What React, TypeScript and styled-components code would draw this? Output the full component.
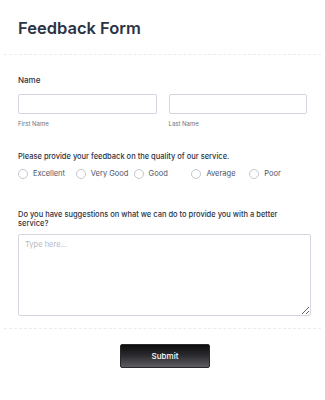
import React from "react";
import styled, { createGlobalStyle } from "styled-components";

const GlobalStyle = createGlobalStyle`
  body {
    margin: 0;
    background: #fff;
    font-family: Inter, "Noto Sans", "Liberation Sans", sans-serif;
    color: #2c3345;
  }
`;

const Page = styled.div`
  width: 325px;
`;

const Header = styled.div`
  padding: 18px 18px 16px;
`;

const Title = styled.h1`
  margin: 0;
  font-size: 16.5px;
  line-height: 20px;
  font-weight: 600;
  color: #2c3345;
`;

const Divider = styled.hr<{ $top?: number }>`
  margin: ${(p) => p.$top ?? 0}px 4px 0;
  border: 0;
  border-top: 1px dashed #eaecef;
`;

const Field = styled.div<{ $top: number }>`
  padding: ${(p) => p.$top}px 18px 0;
`;

const Label = styled.div`
  font-size: 7.5px;
  line-height: 8.6px;
  font-weight: 500;
  color: #2c3345;
`;

const NameLabel = styled(Label)`
  font-size: 8px;
  line-height: 10px;
`;

const Row = styled.div`
  display: grid;
  grid-template-columns: 1fr 1fr;
  column-gap: 12px;
  margin-top: 7px;
`;

const TextInput = styled.input`
  box-sizing: border-box;
  width: 100%;
  height: 20px;
  margin: 0;
  border: 1px solid #d3d6de;
  border-radius: 2px;
  background: #fff;
  outline: none;
`;

const SubLabel = styled.div`
  margin-top: 6px;
  font-size: 6px;
  line-height: 8px;
  color: #6b7285;
`;

const Radios = styled.div`
  display: grid;
  grid-template-columns: repeat(5, 1fr);
  margin-top: 8px;
`;

const RadioItem = styled.label`
  display: flex;
  align-items: center;
  gap: 5px;
  font-size: 7.5px;
  line-height: 10px;
  color: #4c5366;
  white-space: nowrap;
`;

const Circle = styled.span`
  box-sizing: border-box;
  width: 10px;
  height: 10px;
  border-radius: 50%;
  border: 1px solid #c2c7d1;
  background: #fff;
  flex: none;
`;

const TextArea = styled.textarea`
  display: block;
  box-sizing: border-box;
  width: calc(100% + 4px);
  height: 82px;
  margin-top: 6px;
  padding: 5px 6px;
  border: 1px solid #d3d6de;
  border-radius: 2px;
  font-family: inherit;
  font-size: 7.5px;
  color: #2c3345;
  outline: none;
  &::placeholder {
    color: #b4b8c2;
  }
`;

const Footer = styled.div`
  display: flex;
  justify-content: center;
  padding: 15px 0 0 5px;
`;

const SubmitButton = styled.button`
  width: 90px;
  height: 24px;
  border: 1px solid #2a2a2d;
  border-radius: 2px;
  background: linear-gradient(180deg, #0c0c0e 0%, #2a2a2e 45%, #5b5b60 100%);
  color: #fff;
  font-family: inherit;
  font-size: 8px;
  font-weight: 500;
  cursor: pointer;
`;

const ratings = ["Excellent", "Very Good", "Good", "Average", "Poor"];

export default function App() {
  return (
    <Page>
      <GlobalStyle />
      <Header>
        <Title>Feedback Form</Title>
      </Header>
      <Divider />
      <Field $top={20}>
        <NameLabel>Name</NameLabel>
        <Row>
          <div>
            <TextInput />
            <SubLabel>First Name</SubLabel>
          </div>
          <div>
            <TextInput />
            <SubLabel>Last Name</SubLabel>
          </div>
        </Row>
      </Field>
      <Field $top={25}>
        <Label>Please provide your feedback on the quality of our service.</Label>
        <Radios>
          {ratings.map((r) => (
            <RadioItem key={r}>
              <Circle />
              {r}
            </RadioItem>
          ))}
        </Radios>
      </Field>
      <Field $top={32}>
        <Label>
          Do you have suggestions on what we can do to provide you with a better
          service?
        </Label>
        <TextArea placeholder="Type here..." />
      </Field>
      <Divider $top={12} />
      <Footer>
        <SubmitButton>Submit</SubmitButton>
      </Footer>
    </Page>
  );
}
